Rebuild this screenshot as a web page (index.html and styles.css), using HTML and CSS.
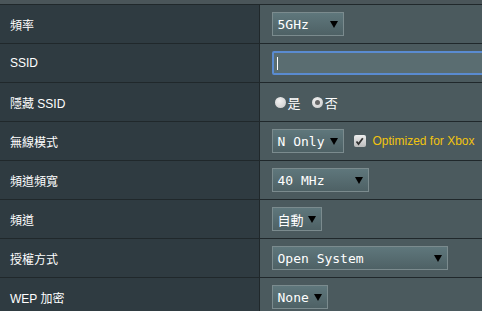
FILE: index.html
```html
<!DOCTYPE html>
<html lang="zh-Hant">
<head>
  <meta charset="UTF-8">
  <title>無線設定</title>
  <link rel="stylesheet" href="styles.css">
</head>
<body>
  <div class="top-strip"></div>
  <table class="form-table">
    <colgroup>
      <col class="col-label">
      <col>
    </colgroup>
    <tr>
      <th>頻率</th>
      <td><div class="select w-band"><span>5GHz</span><span class="arrow"></span></div></td>
    </tr>
    <tr>
      <th>SSID</th>
      <td><div class="text-input focused"><span class="caret"></span></div></td>
    </tr>
    <tr>
      <th>隱藏 SSID</th>
      <td>
        <label class="radio"><span class="dot"></span>是</label>
        <label class="radio"><span class="dot checked"></span>否</label>
      </td>
    </tr>
    <tr>
      <th>無線模式</th>
      <td>
        <div class="inline">
          <div class="select w-mode"><span>N Only</span><span class="arrow"></span></div>
          <span class="checkbox">
            <svg width="11" height="11" viewBox="0 0 11 11"><path d="M2.5 5.5 L4.5 8 L8.8 2.2" fill="none" stroke="#333" stroke-width="1.8"/></svg>
          </span>
          <span class="hint">Optimized for Xbox</span>
        </div>
      </td>
    </tr>
    <tr>
      <th>頻道頻寬</th>
      <td><div class="select w-bw"><span>40 MHz</span><span class="arrow"></span></div></td>
    </tr>
    <tr>
      <th>頻道</th>
      <td><div class="select w-ch"><span>自動</span><span class="arrow"></span></div></td>
    </tr>
    <tr>
      <th>授權方式</th>
      <td><div class="select w-auth"><span>Open System</span><span class="arrow"></span></div></td>
    </tr>
    <tr>
      <th>WEP 加密</th>
      <td><div class="select w-wep"><span>None</span><span class="arrow"></span></div></td>
    </tr>
  </table>
</body>
</html>
```

FILE: styles.css
```css
* {
  box-sizing: border-box;
}
html, body {
  margin: 0;
  padding: 0;
  overflow: hidden;
}
body {
  width: 482px;
  height: 311px;
  background-color: #4b595d;
  font-family: 'Liberation Sans', Arial, 'Noto Sans CJK TC', sans-serif;
  font-size: 12px;
  color: #fff;
}
.top-strip {
  height: 4px;
  background-color: #4a5559;
}
.form-table {
  border-collapse: collapse;
  table-layout: fixed;
  width: 100%;
  border-top: 1px solid #20282b;
}
.col-label {
  width: 259px;
}
.form-table tr {
  height: 39px;
  border-bottom: 1px solid #20282b;
}
.form-table th {
  padding: 0 0 0 10px;
  text-align: left;
  font-weight: normal;
  background-color: #2f3b41;
  border-right: 1px solid #20282b;
}
.form-table td {
  padding: 0 0 0 12px;
  background-color: #4b5a5e;
  white-space: nowrap;
  overflow: hidden;
}
.inline {
  display: flex;
  align-items: center;
}

/* 下拉選單 */
.select {
  display: flex;
  align-items: center;
  justify-content: space-between;
  height: 24px;
  padding: 0 5px;
  border: 1px solid #7b8b8e;
  background: linear-gradient(to bottom, #5f777c, #4e6165);
  font-family: 'DejaVu Sans Mono', 'Noto Sans CJK TC', monospace;
  font-size: 13px;
  color: #fff;
}
.arrow {
  width: 0;
  height: 0;
  border-left: 4px solid transparent;
  border-right: 4px solid transparent;
  border-top: 7px solid #000;
}
.w-band { width: 72px; }
.w-mode { width: 72px; }
.w-bw { width: 97px; }
.w-ch { width: 50px; }
.w-auth { width: 176px; }
.w-wep { width: 56px; }

/* 文字輸入 */
.text-input {
  width: 240px;
  height: 24px;
  background-color: #5a6d71;
  border: 2px solid #5a8bd0;
  border-radius: 2px;
  padding-left: 3px;
  display: flex;
  align-items: center;
}
.caret {
  width: 1px;
  height: 13px;
  background-color: #fff;
}

/* 單選 */
.radio {
  display: inline-flex;
  align-items: center;
  margin-right: 5px;
  font-family: 'Noto Sans CJK TC', sans-serif;
  font-size: 13px;
}
.dot {
  width: 11px;
  height: 11px;
  border-radius: 50%;
  background: radial-gradient(circle at 40% 35%, #f2f2f2, #c8c8c8);
  margin: 0 2px 0 3px;
  position: relative;
}
.dot.checked::after {
  content: "";
  position: absolute;
  left: 3px;
  top: 3px;
  width: 5px;
  height: 5px;
  border-radius: 50%;
  background-color: #666;
}

/* 核取方塊 */
.checkbox {
  width: 12px;
  height: 12px;
  margin: 0 7px 0 10px;
  background: linear-gradient(to bottom, #eee, #bbb);
  border-radius: 2px;
  display: flex;
  align-items: center;
  justify-content: center;
}
.hint {
  color: #f2c40f;
  font-size: 12px;
}
```
